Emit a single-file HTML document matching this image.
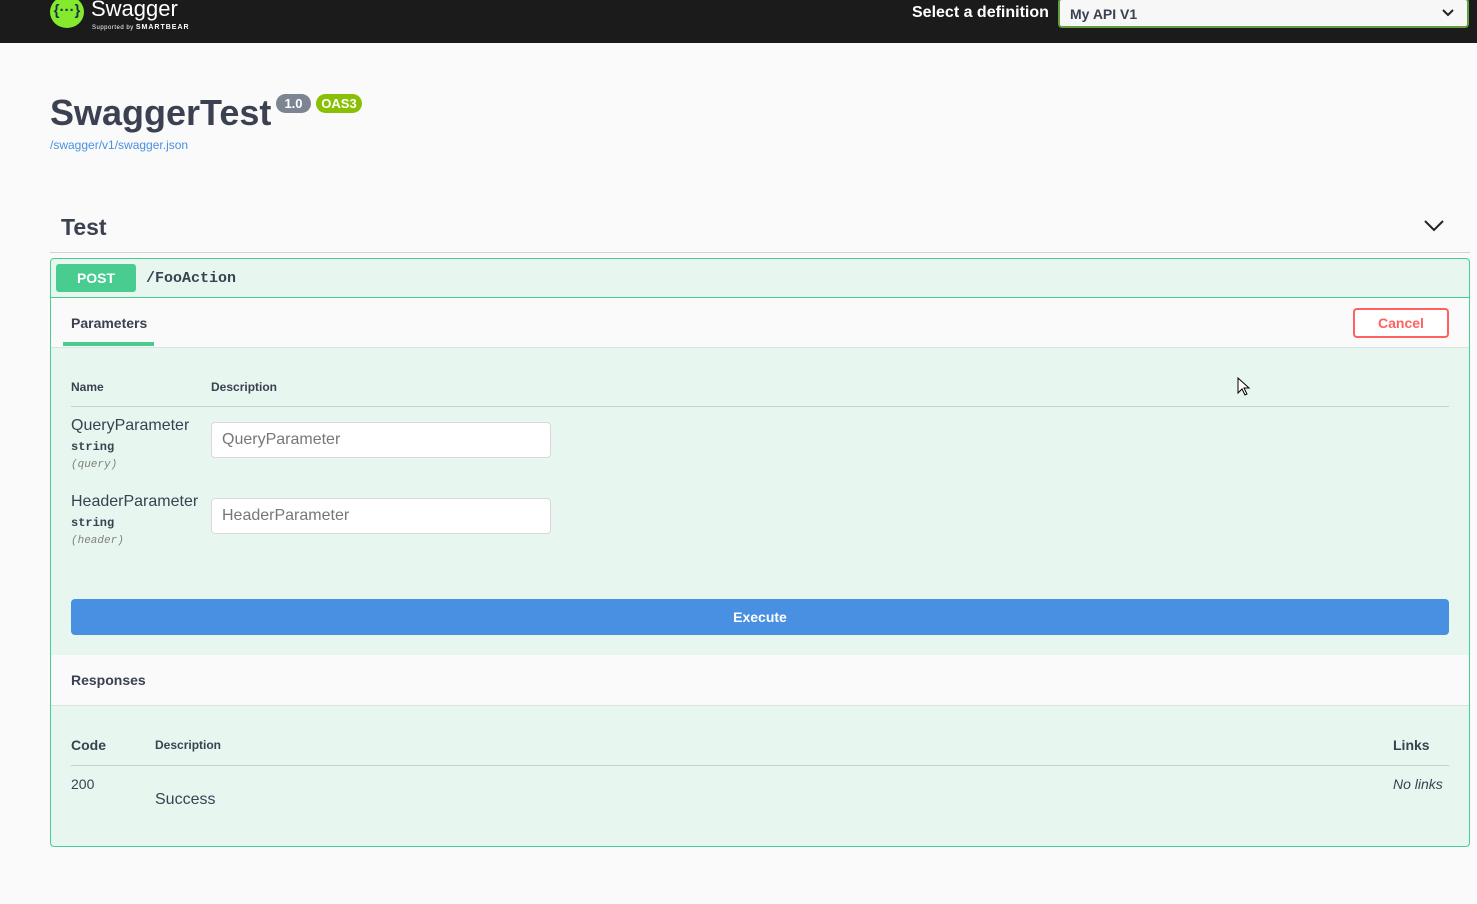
<!DOCTYPE html>
<html><head><meta charset="utf-8"><style>
*{box-sizing:border-box;margin:0;padding:0}
body{width:1477px;height:904px;background:#fafafa;font-family:"Liberation Sans",sans-serif;color:#3b4151;position:relative;overflow:hidden}
.a{position:absolute;white-space:nowrap}
.mono{font-family:"Liberation Mono",monospace}
</style></head><body>
<div class="a" style="left:0;top:0;width:1477px;height:43px;background:#1b1b1b"></div>
<div class="a" style="left:50px;top:-4px;width:34px;height:32px;border-radius:50%;background:#85ea2d;color:#173647;font-weight:bold;font-size:15px;text-align:center;line-height:30px">{···}</div>
<div class="a" style="left:91px;top:-4px;color:#fff;font-size:22px">Swagger</div>
<div class="a" style="left:92px;top:24px;color:#fff;font-size:6px;letter-spacing:0.5px">Supported by <b style="font-size:7px;letter-spacing:1px">SMARTBEAR</b></div>
<div class="a" style="left:912px;top:4px;color:#fff;font-weight:bold;font-size:16px">Select a definition</div>
<div class="a" style="left:1058px;top:-2px;width:411px;height:30px;background:#f7f7f7;border:2px solid #62a03f;border-radius:4px"></div>
<div class="a" style="left:1070px;top:6px;font-weight:bold;font-size:14px">My API V1</div>
<svg class="a" style="left:1442px;top:9px" width="12" height="8"><path d="M1 1l5 5 5-5" stroke="#222" stroke-width="2" fill="none"/></svg>

<div class="a" style="left:50px;top:92px;font-size:36px;font-weight:bold">SwaggerTest</div>
<div class="a" style="left:276px;top:94px;width:35px;height:19px;border-radius:10px;background:#7d8492;color:#fff;font-weight:bold;font-size:13px;text-align:center;line-height:19px">1.0</div>
<div class="a" style="left:316px;top:94px;width:46px;height:19px;border-radius:10px;background:#89bf04;color:#fff;font-weight:bold;font-size:13px;text-align:center;line-height:19px">OAS3</div>
<div class="a" style="left:50px;top:138px;font-size:12px;color:#4990e2">/swagger/v1/swagger.json</div>

<div class="a" style="left:61px;top:214px;font-size:23px;font-weight:bold">Test</div>
<svg class="a" style="left:1424px;top:220px" width="20" height="12"><path d="M1 1l9 9 9-9" stroke="#222" stroke-width="2" fill="none"/></svg>
<div class="a" style="left:50px;top:252px;width:1420px;height:1px;background:#cfd3d8"></div>

<div class="a" style="left:50px;top:258px;width:1420px;height:589px;background:#e8f6f0;border:1px solid #49cc90;border-radius:4px"></div>
<div class="a" style="left:51px;top:297px;width:1418px;height:1px;background:#49cc90"></div>
<div class="a" style="left:56px;top:264px;width:80px;height:28px;background:#49cc90;border-radius:3px;color:#fff;font-weight:bold;font-size:14px;text-align:center;line-height:28px">POST</div>
<div class="a mono" style="left:146px;top:270px;font-size:15px;font-weight:bold">/FooAction</div>

<div class="a" style="left:51px;top:298px;width:1418px;height:50px;background:#fafafa;border-bottom:1px solid #dde3e0"></div>
<div class="a" style="left:71px;top:315px;font-size:14px;font-weight:bold">Parameters</div>
<div class="a" style="left:63px;top:342px;width:91px;height:4px;background:#49cc90"></div>
<div class="a" style="left:1353px;top:308px;width:96px;height:30px;border:2px solid #ff6060;border-radius:4px;color:#ff6060;font-weight:bold;font-size:14px;text-align:center;line-height:26px;background:#fff">Cancel</div>

<div class="a" style="left:71px;top:380px;font-size:12px;font-weight:bold">Name</div>
<div class="a" style="left:211px;top:380px;font-size:12px;font-weight:bold">Description</div>
<div class="a" style="left:71px;top:406px;width:1378px;height:1px;background:#c6d1cd"></div>

<div class="a" style="left:71px;top:417px;font-size:16px">QueryParameter</div>
<div class="a mono" style="left:71px;top:440px;font-size:12px;font-weight:bold">string</div>
<div class="a mono" style="left:71px;top:459px;font-size:11px;font-style:italic;color:#808080">(query)</div>
<div class="a" style="left:211px;top:422px;width:340px;height:36px;background:#fff;border:1px solid #d9d9d9;border-radius:4px;padding:8px 10px;font-size:16px;color:#777">QueryParameter</div>

<div class="a" style="left:71px;top:493px;font-size:16px">HeaderParameter</div>
<div class="a mono" style="left:71px;top:516px;font-size:12px;font-weight:bold">string</div>
<div class="a mono" style="left:71px;top:535px;font-size:11px;font-style:italic;color:#808080">(header)</div>
<div class="a" style="left:211px;top:498px;width:340px;height:36px;background:#fff;border:1px solid #d9d9d9;border-radius:4px;padding:8px 10px;font-size:16px;color:#777">HeaderParameter</div>

<div class="a" style="left:71px;top:599px;width:1378px;height:36px;background:#4990e2;border-radius:4px;color:#fff;font-weight:bold;font-size:14px;text-align:center;line-height:36px">Execute</div>

<div class="a" style="left:51px;top:655px;width:1418px;height:51px;background:#fafafa;border-bottom:1px solid #dde3e0"></div>
<div class="a" style="left:71px;top:672px;font-size:14px;font-weight:bold">Responses</div>

<div class="a" style="left:71px;top:737px;font-size:14px;font-weight:bold">Code</div>
<div class="a" style="left:155px;top:738px;font-size:12px;font-weight:bold">Description</div>
<div class="a" style="left:1393px;top:737px;font-size:14px;font-weight:bold">Links</div>
<div class="a" style="left:71px;top:765px;width:1378px;height:1px;background:#c6d1cd"></div>
<div class="a" style="left:71px;top:776px;font-size:14px">200</div>
<div class="a" style="left:155px;top:791px;font-size:16px">Success</div>
<div class="a" style="left:1393px;top:776px;font-size:14px;font-style:italic">No links</div>

<svg class="a" style="left:1237px;top:377px" width="14" height="20"><path d="M1 1v15l4-4 3 6 2-1-3-6h5z" fill="#fff" stroke="#000" stroke-width="1"/></svg>
</body></html>
